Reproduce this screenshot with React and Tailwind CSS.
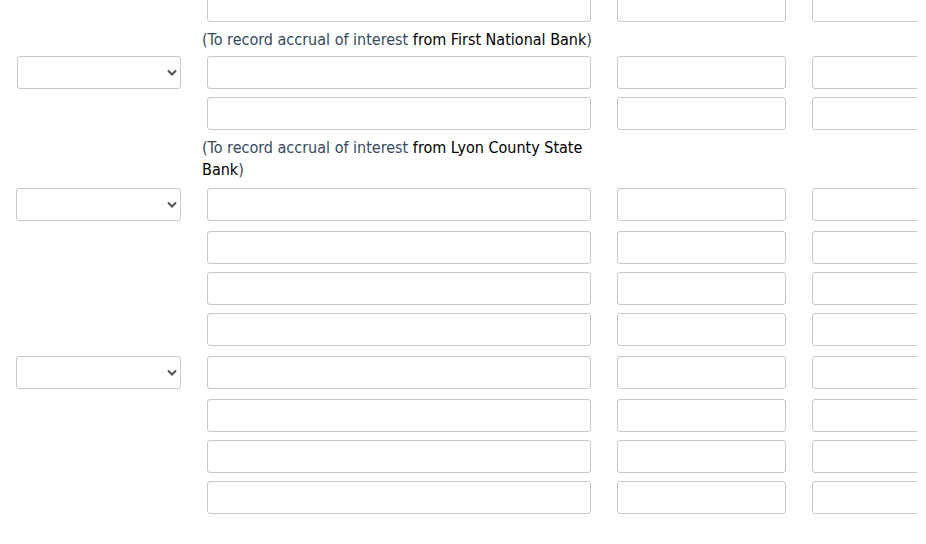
import React from 'react';

const Field = ({ className = '' }) => (
  <input type="text" className={`h-[33px] border border-[#c8c8c8] rounded-[3px] bg-white px-2 outline-none ${className}`} />
);

const AccountSelect = ({ left = 16 }) => (
  <div className={`relative ${left === 17 ? 'ml-[17px] w-[164px]' : 'ml-[16px] w-[165px]'}`}>
    <select className="appearance-none w-full h-[33px] border border-[#c8c8c8] rounded-[3px] bg-white px-2 text-sm outline-none">
      <option value=""></option>
    </select>
    <svg className="absolute right-[3px] top-[12px] pointer-events-none" width="12" height="9" viewBox="0 0 12 9">
      <path d="M2 2.5 L6 6.5 L10 2.5" fill="none" stroke="#555" strokeWidth="2.2" />
    </svg>
  </div>
);

const Row = ({ select, left, mt = 'mt-[8px]' }) => (
  <div className={`flex items-center ${mt}`}>
    <div className="w-[202px] shrink-0 flex">{select && <AccountSelect left={left} />}</div>
    <Field className="ml-[5px] w-[384px] shrink-0" />
    <Field className="ml-[26px] w-[169px] shrink-0" />
    <Field className="ml-[26px] w-[169px] shrink-0" />
  </div>
);

const Note = ({ bank, mt }) => (
  <div className={`flex ${mt}`}>
    <div className="w-[202px] shrink-0" />
    <p className="w-[395px] text-[16px] leading-[22px] text-black">
      <span className="text-[#34495e]">(To record accrual of interest </span>
      from {bank}
      <span className="text-[#34495e]">)</span>
    </p>
  </div>
);

export default function App() {
  return (
    <div
      className="w-[917px] h-[544px] overflow-hidden bg-white"
      style={{ fontFamily: '"DejaVu Sans Condensed", "DejaVu Sans", sans-serif', fontStretch: 'condensed' }}
    >
      <div className="-mt-[11px]">
        <Row mt="mt-0" />
        <Note bank="First National Bank" mt="mt-[7px]" />
        <Row select left={17} mt="mt-[5px]" />
        <Row />
        <Note bank="Lyon County State Bank" mt="mt-[7px]" />
        <Row select mt="mt-[7px]" />
        <Row mt="mt-[10px]" />
        <Row />
        <Row />
        <Row select mt="mt-[10px]" />
        <Row mt="mt-[10px]" />
        <Row />
        <Row />
      </div>
    </div>
  );
}
